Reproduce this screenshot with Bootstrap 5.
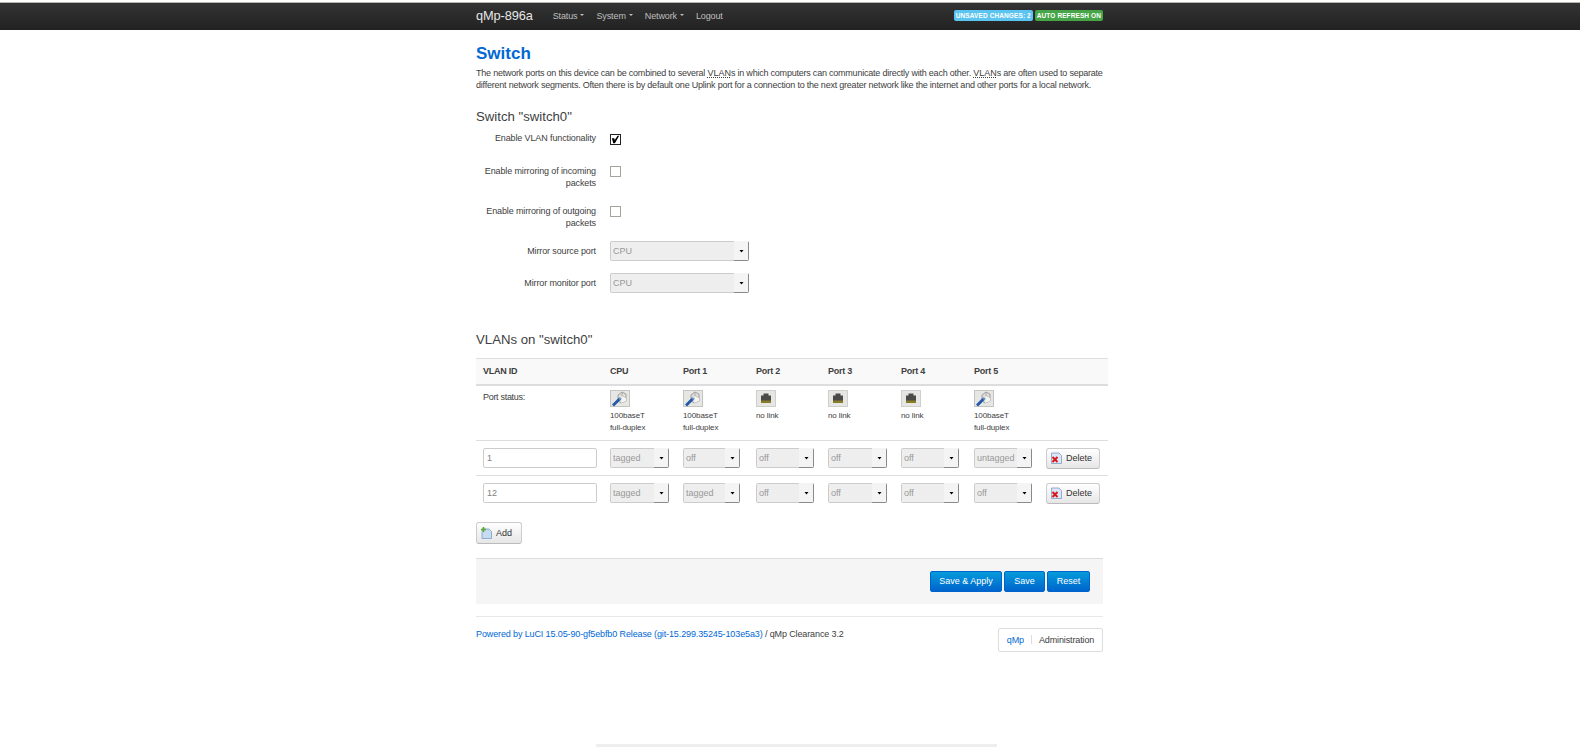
<!DOCTYPE html>
<html lang="en">
<head>
    <meta charset="UTF-8">
    <meta name="viewport" content="width=device-width, initial-scale=1.0">
    <title>qMp-896a - Switch</title>
    <link href="https://cdn.jsdelivr.net/npm/bootstrap@5.3.0/dist/css/bootstrap.min.css" rel="stylesheet">

    <style>
        html, body {
            height: 747px;
            overflow: hidden;
        }

        body {
            display: flex;
            flex-direction: column;
            font-family: "Liberation Sans", Arial, sans-serif;
            font-size: 9px;
            letter-spacing: -.12px;
            line-height: 12px;
            color: #404040;
            background: #fff;
        }

        a {
            color: #0069d6;
            text-decoration: none;
        }

        /* top bar */
        .top-bar {
            height: 28px;
            margin-top: 2px;
            padding: 0;
            border-top: 1px solid #b8b6ac;
            background: linear-gradient(#333, #222);
            flex-shrink: 0;
        }

        .page-wrap {
            width: 627px;
            margin-left: 476px;
        }

        .top-bar .page-wrap {
            height: 100%;
            padding-bottom: 2px;
        }

        .top-brand {
            font-size: 12.8px;
            color: #e6e6e6;
            margin-right: 20px;
        }

        .top-link {
            font-size: 9px;
            color: #bfbfbf;
        }

        .top-link.dropdown-toggle::after {
            border-top-width: 2.5px;
            border-left-width: 2.5px;
            border-right-width: 2.5px;
            margin-left: 3px;
        }

        .top-menu {
            gap: 12px;
        }

        .pill-group {
            gap: 2px;
            margin-top: 7px;
        }

        .state-pill {
            font-size: 6.5px;
            line-height: 11px;
            height: 11px;
            padding: 0 2px;
            font-weight: bold;
            color: #fff;
            border-radius: 2px;
            letter-spacing: .1px;
            white-space: nowrap;
        }

        .pill-info { background: #5bc4f0; }
        .pill-ok { background: #46a546; }

        /* headings */
        .page-title {
            font-size: 17px;
            line-height: 22px;
            font-weight: bold;
            color: #0069d6;
            margin: 13px 0 2px;
            letter-spacing: 0;
        }

        .page-intro {
            margin: 0;
            letter-spacing: -.22px;
        }

        .page-intro abbr {
            letter-spacing: 0;
        }

        .sec-title {
            font-size: 13.2px;
            line-height: 18px;
            font-weight: normal;
            margin: 0;
            color: #404040;
            letter-spacing: 0;
        }

        .sec-switch { margin-top: 17px; margin-bottom: 6px; }
        .sec-vlan { margin-top: 38px; margin-bottom: 9px; }

        /* config rows */
        .cfg-row {
            display: flex;
            gap: 14px;
            margin-bottom: 12px;
        }

        .cfg-first { min-height: 21px; }
        .cfg-second { min-height: 28px; }

        .cfg-label {
            width: 120px;
            text-align: right;
            flex-shrink: 0;
            margin: 0;
        }

        .cfg-center { align-items: center; }

        .tick-box {
            appearance: none;
            width: 11px;
            height: 11px;
            margin: 1px 0 0;
            border: 1px solid #a5a5a0;
            background: #fff;
        }

        .tick-box:checked {
            border-color: #222;
            margin-top: 2px;
            background: #fff url("data:image/svg+xml,%3Csvg xmlns='http://www.w3.org/2000/svg' viewBox='0 0 11 11'%3E%3Cpath d='M1 4 L4 4 L4.6 6 L8 1 L10 1 L4.8 10 L2.8 10 Z' fill='%23000'/%3E%3C/svg%3E") no-repeat center / 100% 100%;
        }

        .drop-box.form-select {
            display: block;
            height: 20px;
            min-height: 0;
            padding: 0 16px 0 3px;
            font-size: 9px;
            line-height: 20px;
            letter-spacing: 0;
            color: #999;
            opacity: 1;
            border: 0;
            border-radius: 2px;
            background-color: #ccc;
            background-image:
                url("data:image/svg+xml,%3Csvg xmlns='http://www.w3.org/2000/svg' width='15' height='20'%3E%3Crect width='15' height='20' fill='%23f4f4f4'/%3E%3Crect x='14' width='1' height='20' fill='%238a8a8a'/%3E%3Crect y='19' width='15' height='1' fill='%238a8a8a'/%3E%3Cpath d='M5.5 9 h4 l-2 2.5z' fill='%23000'/%3E%3C/svg%3E"),
                linear-gradient(#eee, #eee);
            background-repeat: no-repeat, no-repeat;
            background-position: right top, 1px 1px;
            background-size: 15px 20px, calc(100% - 2px) calc(100% - 2px);
            font-family: inherit;
        }

        .drop-wide { width: 139px; }
        .drop-59 { width: 59px; }
        .drop-58 { width: 58px; }
        .drop-57 { width: 57px; }

        /* vlan table */
        .vlan-table {
            width: 632px;
            table-layout: fixed;
            margin: 0;
            font-size: 9px;
            line-height: 12px;
            color: #404040;
            border-top: 1px solid #ddd;
        }

        .vlan-table th,
        .vlan-table td {
            padding: 0 7px;
            border-bottom: 1px solid #ddd;
            box-shadow: none;
            color: #404040;
        }

        .vlan-table thead th {
            height: 26px;
            background: #f9f9f9;
            vertical-align: middle;
            font-weight: bold;
            letter-spacing: -.25px;
            border-bottom-width: 2px;
        }

        .vlan-table .status-row td {
            height: 56px;
            padding-top: 5px;
            vertical-align: top;
            letter-spacing: -.3px;
        }

        .vlan-table .status-row .port-cell {
            font-size: 8px;
            letter-spacing: -.1px;
        }

        .vlan-table .vlan-row td {
            height: 35px;
            vertical-align: middle;
        }

        .vlan-table .vlan-row:last-child td {
            border-bottom: 0;
        }

        .port-ico {
            display: block;
            width: 20px;
            height: 17px;
            margin-top: -1px;
            margin-bottom: 3px;
        }

        .vlan-id.form-control {
            width: 114px;
            height: 20px;
            min-height: 0;
            padding: 0 3px;
            font-size: 9px;
            line-height: 18px;
            color: #808080;
            border: 1px solid #ccc;
            border-radius: 2px;
        }

        /* buttons */
        .soft-btn.btn {
            display: inline-flex;
            align-items: center;
            height: 21px;
            padding: 0 4px;
            gap: 4px;
            font-size: 9px;
            line-height: 12px;
            color: #333;
            border: 1px solid #ccc;
            border-bottom-color: #bbb;
            border-radius: 3px;
            background: linear-gradient(#fff, #e6e6e6);
        }

        .soft-btn svg {
            width: 11px;
            height: 12px;
            flex-shrink: 0;
        }

        .btn-delete { width: 54px; }
        .btn-add { width: 46px; height: 22px !important; margin-top: 11px; }

        .save-bar {
            height: 46px;
            margin-top: 14px;
            padding: 12px 13px 0 0;
            background: #f5f5f5;
            border-top: 1px solid #ddd;
            gap: 2px;
        }

        .save-btn.btn {
            height: 21px;
            padding: 0;
            font-size: 9px;
            line-height: 19px;
            color: #fff;
            border: 1px solid #0064cd;
            border-radius: 2px;
            background: linear-gradient(#049cdb, #0064cd);
        }

        .btn-apply { width: 72px; }
        .btn-save { width: 41px; }
        .btn-reset { width: 43px; }

        .foot-area {
            margin-top: 12px;
            padding-top: 11px;
            border-top: 1px solid #e8e8e8;
        }

        .foot-links {
            width: 105px;
            height: 24px;
            border: 1px solid #ddd;
            border-radius: 2px;
        }

        .foot-sep {
            width: 1px;
            height: 9px;
            margin: 0 7px;
            background: #ddd;
        }

        .peek-bar {
            width: 401px;
            height: 3px;
            margin-left: 596px;
            margin-top: auto;
            background: #eee;
            flex-shrink: 0;
        }
    </style>

</head>
<body>

    <!-- shared icons -->
    <svg width="0" height="0" class="position-absolute">
        <symbol id="ico-up" viewBox="0 0 20 17">
            <rect x=".5" y=".5" width="19" height="16" fill="#e6e6e4" stroke="#c4c4c0"/>
            <path d="M8 5 L12 2 L16 4 L16 11 L11 13 L8 11 Z" fill="#dededc" stroke="#8f8f8d" stroke-width=".8"/>
            <path d="M12 2 L12 6 L16 8" fill="none" stroke="#a0a09e" stroke-width=".8"/>
            <path d="M12 6 L16 8 L16 11 L11 13 Z" fill="#f4f4f2"/>
            <path d="M3 15.5 L10 8.5" stroke="#2458a8" stroke-width="2.8"/>
            <path d="M9 8 L11 9.5" stroke="#6b8fc4" stroke-width="2"/>
        </symbol>
        <symbol id="ico-down" viewBox="0 0 20 17">
            <rect x=".5" y=".5" width="19" height="16" fill="#e6e6e4" stroke="#cfcfcb"/>
            <path d="M7.5 3.5 H12.5 V5.5 H15 V13 H5 V5.5 H7.5 Z" fill="#4a4a48"/>
            <rect x="5" y="10.5" width="10" height="2.5" fill="#8a7d2a"/>
        </symbol>
        <symbol id="ico-del" viewBox="0 0 11 12">
            <path d="M.5 1 H8 L10.5 3.5 V11.5 H.5 Z" fill="#dbe7f6" stroke="#7f9cc4" stroke-width=".8"/>
            <path d="M1.5 5 L6.5 10 M6.5 5 L1.5 10" stroke="#d81818" stroke-width="2"/>
        </symbol>
        <symbol id="ico-add" viewBox="0 0 11 12">
            <path d="M1 2 H8 L10.5 4.5 V11.5 H1 Z" fill="#c5dcf2" stroke="#7f9cc4" stroke-width=".8"/>
            <path d="M2.5 0 V5 M0 2.5 H5" stroke="#5aa82c" stroke-width="1.6"/>
        </symbol>
    </svg>

    <!-- Top bar -->
    <nav class="navbar top-bar">
        <div class="page-wrap d-flex align-items-center">
            <a class="top-brand" href="#">qMp-896a</a>
            <div class="d-flex top-menu">
                <a class="top-link dropdown-toggle" href="#">Status</a>
                <a class="top-link dropdown-toggle" href="#">System</a>
                <a class="top-link dropdown-toggle" href="#">Network</a>
                <a class="top-link" href="#">Logout</a>
            </div>
            <div class="ms-auto d-flex pill-group align-self-start">
                <span class="state-pill pill-info">UNSAVED CHANGES: 2</span>
                <span class="state-pill pill-ok">AUTO REFRESH ON</span>
            </div>
        </div>
    </nav>

    <div class="page-wrap">
        <h2 class="page-title">Switch</h2>
        <p class="page-intro">The network ports on this device can be combined to several <abbr title="Virtual Local Area Network">VLAN</abbr>s in which computers can communicate directly with each other. <abbr title="Virtual Local Area Network">VLAN</abbr>s are often used to separate different network segments. Often there is by default one Uplink port for a connection to the next greater network like the internet and other ports for a local network.</p>

        <h3 class="sec-title sec-switch">Switch "switch0"</h3>

        <div class="cfg-row cfg-first">
            <label class="cfg-label">Enable VLAN functionality</label>
            <input class="tick-box" type="checkbox" checked>
        </div>
        <div class="cfg-row cfg-second">
            <label class="cfg-label">Enable mirroring of incoming packets</label>
            <input class="tick-box" type="checkbox">
        </div>
        <div class="cfg-row">
            <label class="cfg-label">Enable mirroring of outgoing packets</label>
            <input class="tick-box" type="checkbox">
        </div>
        <div class="cfg-row cfg-center">
            <label class="cfg-label">Mirror source port</label>
            <select class="form-select drop-box drop-wide" disabled><option>CPU</option></select>
        </div>
        <div class="cfg-row cfg-center">
            <label class="cfg-label">Mirror monitor port</label>
            <select class="form-select drop-box drop-wide" disabled><option>CPU</option></select>
        </div>

        <h3 class="sec-title sec-vlan">VLANs on "switch0"</h3>

        <table class="table vlan-table">
            <colgroup>
                <col style="width:127px"><col style="width:73px"><col style="width:73px"><col style="width:72px">
                <col style="width:73px"><col style="width:73px"><col style="width:72px"><col style="width:69px">
            </colgroup>
            <thead>
                <tr>
                    <th>VLAN ID</th><th>CPU</th><th>Port 1</th><th>Port 2</th><th>Port 3</th><th>Port 4</th><th>Port 5</th><th></th>
                </tr>
            </thead>
            <tbody id="vlan-body">
                <tr class="status-row" id="status-row"><td>Port status:</td></tr>
            </tbody>
        </table>

        <button class="btn soft-btn btn-add" type="button"><svg><use href="#ico-add"/></svg>Add</button>

        <div class="save-bar d-flex justify-content-end">
            <button class="btn save-btn btn-apply" type="button">Save &amp; Apply</button>
            <button class="btn save-btn btn-save" type="button">Save</button>
            <button class="btn save-btn btn-reset" type="button">Reset</button>
        </div>

        <div class="foot-area d-flex justify-content-between align-items-start">
            <div><a href="#">Powered by LuCI 15.05-90-gf5ebfb0 Release (git-15.299.35245-103e5a3)</a> / qMp Clearance 3.2</div>
            <div class="foot-links d-flex align-items-center justify-content-center">
                <a href="#">qMp</a><span class="foot-sep"></span><span>Administration</span>
            </div>
        </div>
    </div>

    <div class="peek-bar"></div>

    <script>
        const ports = [
            { up: true }, { up: true }, { up: false }, { up: false }, { up: false }, { up: true }
        ];
        const vlans = [
            { id: "1", modes: ["tagged", "off", "off", "off", "off", "untagged"] },
            { id: "12", modes: ["tagged", "tagged", "off", "off", "off", "off"] }
        ];
        const dropWidths = ["drop-59", "drop-57", "drop-58", "drop-59", "drop-58", "drop-58"];

        const statusRow = document.getElementById("status-row");
        ports.forEach(port => {
            statusRow.innerHTML += `
                <td class="port-cell">
                    <svg class="port-ico"><use href="#${port.up ? "ico-up" : "ico-down"}"/></svg>
                    ${port.up ? "100baseT<br>full-duplex" : "no link"}
                </td>`;
        });
        statusRow.innerHTML += "<td></td>";

        const body = document.getElementById("vlan-body");
        vlans.forEach(vlan => {
            const cells = vlan.modes.map((mode, i) => `
                <td><select class="form-select drop-box ${dropWidths[i]}" disabled><option>${mode}</option></select></td>`).join("");
            body.innerHTML += `
                <tr class="vlan-row">
                    <td><input class="form-control vlan-id" type="text" value="${vlan.id}"></td>
                    ${cells}
                    <td><button class="btn soft-btn btn-delete" type="button"><svg><use href="#ico-del"/></svg>Delete</button></td>
                </tr>`;
        });
    </script>

</body>
</html>
